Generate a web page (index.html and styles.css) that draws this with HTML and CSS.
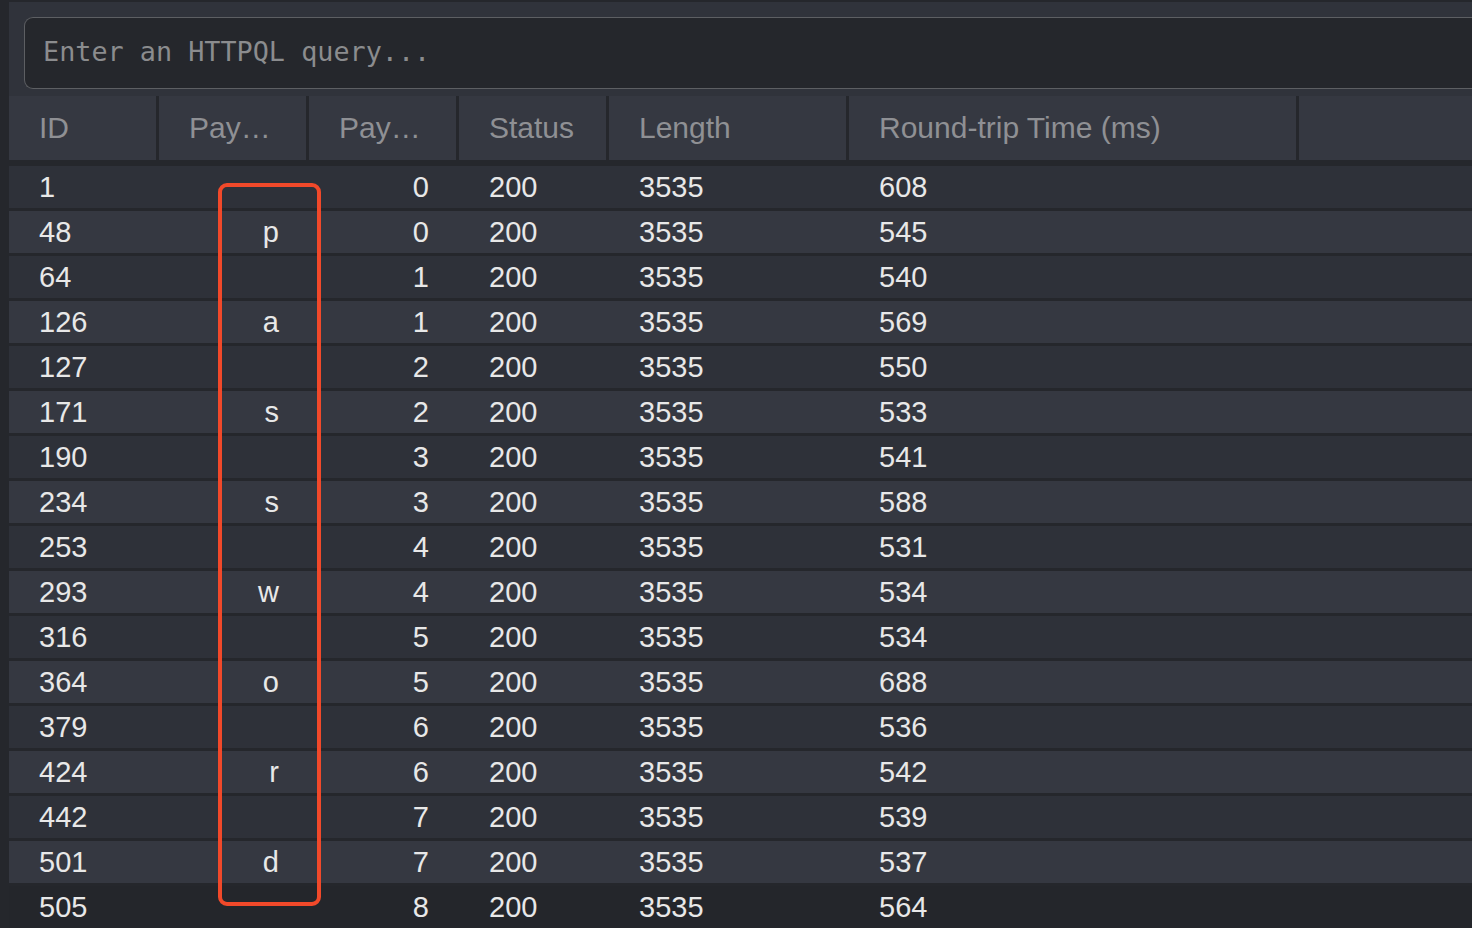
FILE: index.html
```html
<!DOCTYPE html>
<html lang="en">
<head>
<meta charset="utf-8">
<title>Intruder results</title>
<link rel="stylesheet" href="styles.css">
</head>
<body>
<div class="app">
  <div class="panel">
    <div class="query">
      <input class="query-input" type="text" placeholder="Enter an HTTPQL query...">
    </div>
    <div class="table">
      <div class="thead">
        <div class="th">ID</div>
        <div class="th">Pay…</div>
        <div class="th">Pay…</div>
        <div class="th">Status</div>
        <div class="th">Length</div>
        <div class="th">Round-trip Time (ms)</div>
        <div class="th"></div>
      </div>
      <div class="tbody">
        <div class="tr"><div class="td">1</div><div class="td num"></div><div class="td num">0</div><div class="td">200</div><div class="td">3535</div><div class="td">608</div><div class="td"></div></div>
        <div class="tr alt"><div class="td">48</div><div class="td num">p</div><div class="td num">0</div><div class="td">200</div><div class="td">3535</div><div class="td">545</div><div class="td"></div></div>
        <div class="tr"><div class="td">64</div><div class="td num"></div><div class="td num">1</div><div class="td">200</div><div class="td">3535</div><div class="td">540</div><div class="td"></div></div>
        <div class="tr alt"><div class="td">126</div><div class="td num">a</div><div class="td num">1</div><div class="td">200</div><div class="td">3535</div><div class="td">569</div><div class="td"></div></div>
        <div class="tr"><div class="td">127</div><div class="td num"></div><div class="td num">2</div><div class="td">200</div><div class="td">3535</div><div class="td">550</div><div class="td"></div></div>
        <div class="tr alt"><div class="td">171</div><div class="td num">s</div><div class="td num">2</div><div class="td">200</div><div class="td">3535</div><div class="td">533</div><div class="td"></div></div>
        <div class="tr"><div class="td">190</div><div class="td num"></div><div class="td num">3</div><div class="td">200</div><div class="td">3535</div><div class="td">541</div><div class="td"></div></div>
        <div class="tr alt"><div class="td">234</div><div class="td num">s</div><div class="td num">3</div><div class="td">200</div><div class="td">3535</div><div class="td">588</div><div class="td"></div></div>
        <div class="tr"><div class="td">253</div><div class="td num"></div><div class="td num">4</div><div class="td">200</div><div class="td">3535</div><div class="td">531</div><div class="td"></div></div>
        <div class="tr alt"><div class="td">293</div><div class="td num">w</div><div class="td num">4</div><div class="td">200</div><div class="td">3535</div><div class="td">534</div><div class="td"></div></div>
        <div class="tr"><div class="td">316</div><div class="td num"></div><div class="td num">5</div><div class="td">200</div><div class="td">3535</div><div class="td">534</div><div class="td"></div></div>
        <div class="tr alt"><div class="td">364</div><div class="td num">o</div><div class="td num">5</div><div class="td">200</div><div class="td">3535</div><div class="td">688</div><div class="td"></div></div>
        <div class="tr"><div class="td">379</div><div class="td num"></div><div class="td num">6</div><div class="td">200</div><div class="td">3535</div><div class="td">536</div><div class="td"></div></div>
        <div class="tr alt"><div class="td">424</div><div class="td num">r</div><div class="td num">6</div><div class="td">200</div><div class="td">3535</div><div class="td">542</div><div class="td"></div></div>
        <div class="tr"><div class="td">442</div><div class="td num"></div><div class="td num">7</div><div class="td">200</div><div class="td">3535</div><div class="td">539</div><div class="td"></div></div>
        <div class="tr alt"><div class="td">501</div><div class="td num">d</div><div class="td num">7</div><div class="td">200</div><div class="td">3535</div><div class="td">537</div><div class="td"></div></div>
        <div class="tr last"><div class="td">505</div><div class="td num"></div><div class="td num">8</div><div class="td">200</div><div class="td">3535</div><div class="td">564</div><div class="td"></div></div>
      </div>
      <div class="highlight"></div>
    </div>
  </div>
</div>
</body>
</html>
```

FILE: styles.css
```css
html, body {
  margin: 0;
  padding: 0;
  background: #25272c;
  overflow: hidden;
  height: 928px;
}

.app {
  padding: 2px 0 0 9px;
  background: #25272c;
  font-family: "Liberation Sans", Arial, sans-serif;
}

.panel {
  background: #30333b;
  padding-top: 15px;
}

.query {
  padding: 0 0 7px 15px;
}

.query-input {
  display: block;
  box-sizing: border-box;
  width: 100%;
  height: 72px;
  margin: 0;
  padding: 0 18px 4px 18px;
  background: #25272c;
  border: 1px solid #5d5f63;
  border-right: none;
  border-radius: 9px 0 0 9px;
  font-family: "DejaVu Sans Mono", "Liberation Mono", monospace;
  font-size: 26.8px;
  color: #e6e6e6;
  outline: none;
}

.query-input::placeholder {
  color: #8b8c8e;
  opacity: 1;
}

.table {
  position: relative;
  background: #25272c;
}

.thead,
.tr {
  display: grid;
  grid-template-columns: 147px 147px 147px 147px 237px 447px 1fr;
  column-gap: 3px;
}

.thead {
  height: 64px;
  margin-bottom: 6px;
}

.th {
  background: #353841;
  color: #8f9094;
  font-size: 30px;
  line-height: 64px;
  padding-left: 30px;
  white-space: nowrap;
  overflow: hidden;
}

.tbody {
  display: flex;
  flex-direction: column;
  row-gap: 3px;
}

.tr {
  height: 42px;
  background: #2e3139;
}

.tr.alt {
  background: #353841;
}

.tr.last {
  background: #24262b;
}

.td {
  color: #e8e8e8;
  font-size: 29px;
  line-height: 42px;
  padding-left: 30px;
  white-space: nowrap;
}

.td.num {
  padding-left: 0;
  padding-right: 27px;
  text-align: right;
}

.highlight {
  position: absolute;
  left: 209px;
  top: 87px;
  width: 103px;
  height: 723px;
  box-sizing: border-box;
  border: 4px solid #f1492a;
  border-radius: 9px;
}
```
